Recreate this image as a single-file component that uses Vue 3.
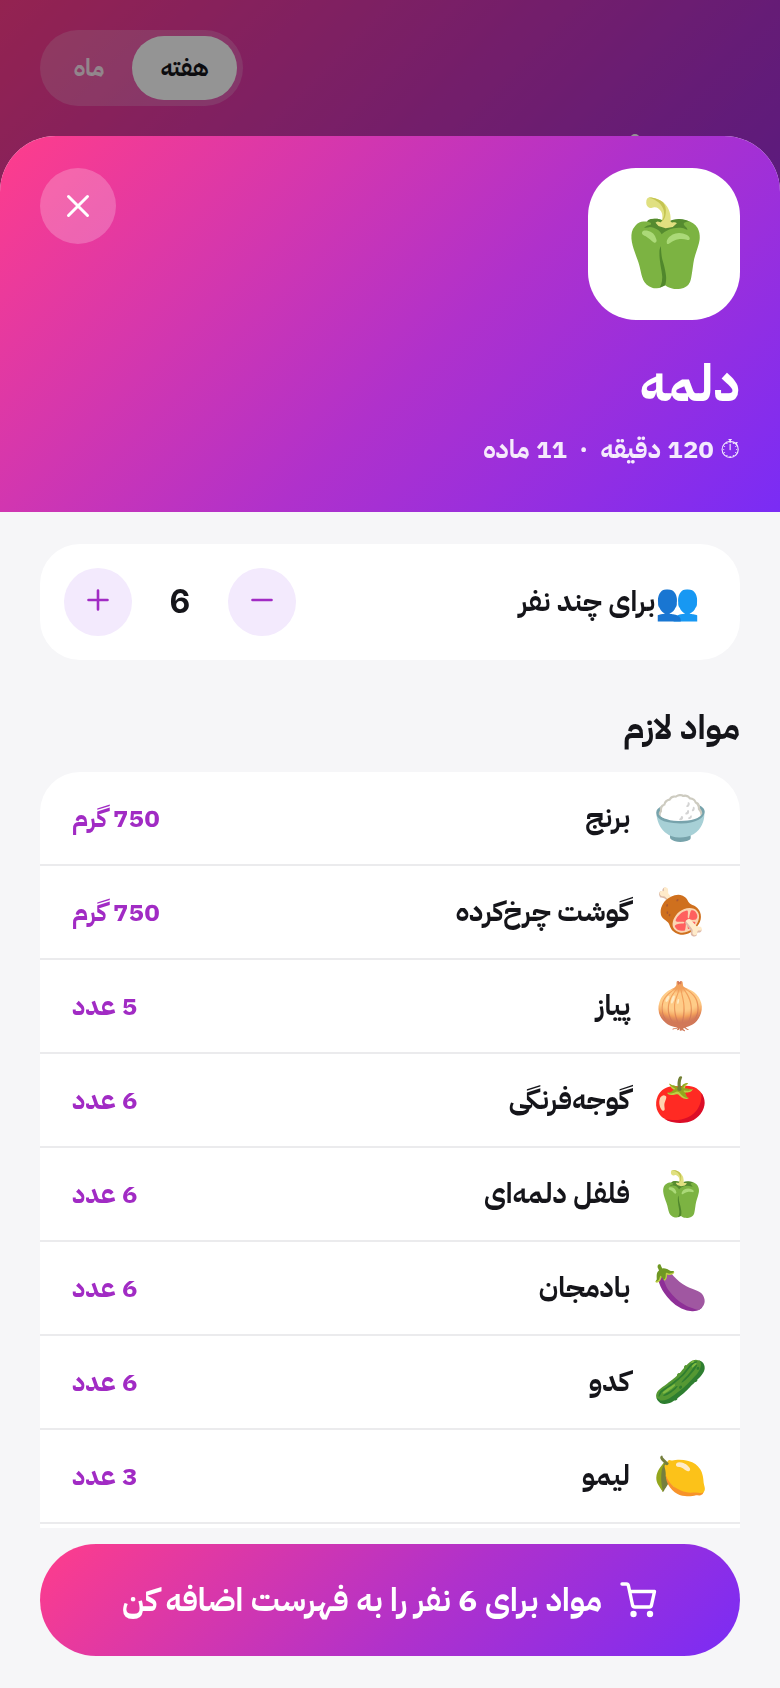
<template>
  <div class="page" dir="rtl">
    <header class="page-header">
      <div class="toggle">
        <button
          v-for="item in ranges"
          :key="item"
          type="button"
          class="toggle-item"
          :class="{ active: item === range }"
          @click="range = item"
        >
          {{ item }}
        </button>
      </div>
      <span class="page-dot"></span>
    </header>

    <div class="overlay">
      <section class="sheet">
        <!-- sheet header -->
        <div class="hero">
          <div class="hero-top">
            <div class="hero-icon">🫑</div>
            <button type="button" class="close-btn" aria-label="بستن">
              <svg width="32" height="32" viewBox="0 0 32 32">
                <path d="M6.5 6.5 L25.5 25.5 M25.5 6.5 L6.5 25.5" />
              </svg>
            </button>
          </div>
          <h1>دلمه</h1>
          <p class="meta">
            <span><span class="timer">⏱</span> 120 دقیقه</span>
            <span>·</span>
            <span>11 ماده</span>
          </p>
        </div>

        <div class="content">
          <!-- servings -->
          <div class="servings">
            <div class="servings-label">
              <span class="people">👥</span>
              <span>برای چند نفر</span>
            </div>
            <div class="stepper">
              <button type="button" aria-label="کمتر" @click="servings--">
                <svg width="28" height="32" viewBox="0 0 28 32"><path d="M4.5 14 H23.5" /></svg>
              </button>
              <span class="count">{{ servings }}</span>
              <button type="button" aria-label="بیشتر" @click="servings++">
                <svg width="28" height="32" viewBox="0 0 28 32"><path d="M4.5 14 H23.5 M14 4.5 V23.5" /></svg>
              </button>
            </div>
          </div>

          <!-- ingredients -->
          <h2>مواد لازم</h2>
          <ul class="ingredients">
            <li v-for="item in ingredients" :key="item.name">
              <span class="emoji">{{ item.icon }}</span>
              <span class="name">{{ item.name }}</span>
              <span class="amount">{{ item.amount }}</span>
            </li>
          </ul>
        </div>

        <div class="footer">
          <button type="button" class="add-btn">
            <svg width="40" height="40" viewBox="0 0 40 40">
              <path d="M4 4 H8.5 Q10 4 10.5 6 L14.5 25 Q15 27 17 27 H31.5 Q33 27 33.5 25 L36.5 11.5 H12" />
              <circle cx="15.5" cy="34" r="3.2" />
              <circle cx="32" cy="34" r="3.2" />
            </svg>
            <span>مواد برای {{ servings }} نفر را به فهرست اضافه کن</span>
          </button>
        </div>
      </section>
    </div>
  </div>
</template>

<script setup>
import { ref } from 'vue'

const ranges = ['هفته', 'ماه']
const range = ref('هفته')
const servings = ref(6)

const ingredients = [
  { icon: '🍚', name: 'برنج', amount: '750 گرم' },
  { icon: '🍖', name: 'گوشت چرخ‌کرده', amount: '750 گرم' },
  { icon: '🧅', name: 'پیاز', amount: '5 عدد' },
  { icon: '🍅', name: 'گوجه‌فرنگی', amount: '6 عدد' },
  { icon: '🫑', name: 'فلفل دلمه‌ای', amount: '6 عدد' },
  { icon: '🍆', name: 'بادمجان', amount: '6 عدد' },
  { icon: '🥒', name: 'کدو', amount: '6 عدد' },
  { icon: '🍋', name: 'لیمو', amount: '3 عدد' }
]
</script>

<style>
body {
  margin: 0;
  background: #f6f6f8;
}
</style>

<style scoped>
* {
  box-sizing: border-box;
}

.page {
  height: 100vh;
  overflow: hidden;
  color: #15151a;
  font-family: "IBM Plex Sans Arabic", "Noto Sans", sans-serif;
}

button {
  border: none;
  padding: 0;
  font-family: inherit;
  cursor: pointer;
}

svg {
  fill: none;
  stroke: currentColor;
  stroke-linecap: round;
  stroke-linejoin: round;
}

.page-header,
.hero,
.add-btn {
  background: linear-gradient(135deg, #ff3d8b 0%, #b031cb 56%, #7a2cf5 100%);
}

.page-header {
  display: flex;
  flex-direction: column;
  gap: 28px;
  height: 600px;
  padding: 30px 40px;
}

.toggle {
  display: flex;
  align-self: flex-end;
  padding: 6px;
  border-radius: 38px;
  background: rgba(255, 255, 255, 0.2);
}

.toggle-item {
  height: 64px;
  padding: 0 28px;
  border-radius: 32px;
  background: transparent;
  color: rgba(255, 255, 255, 0.85);
  font-size: 24px;
  font-weight: 700;
}

.toggle-item.active {
  background: #fff;
  color: #15151a;
}

.page-dot {
  width: 10px;
  height: 10px;
  margin-inline-start: 100px;
  border-radius: 50%;
  background: #fff;
}

.overlay {
  position: fixed;
  inset: 0;
  display: flex;
  padding-top: 136px;
  background: rgba(0, 0, 0, 0.42);
}

.sheet {
  flex: 1;
  display: flex;
  flex-direction: column;
  min-width: 0;
  overflow: hidden;
  border-radius: 56px 56px 0 0;
  background: #f6f6f8;
}

.hero {
  flex: none;
  padding: 32px 40px 40px;
  color: #fff;
}

.hero-top {
  display: flex;
  justify-content: space-between;
  align-items: flex-start;
}

.hero-icon {
  display: flex;
  align-items: center;
  justify-content: center;
  width: 152px;
  height: 152px;
  border-radius: 48px;
  background: #fff;
  font-size: 84px;
  line-height: 96px;
}

.close-btn {
  display: flex;
  align-items: center;
  justify-content: center;
  width: 76px;
  height: 76px;
  border-radius: 50%;
  background: rgba(255, 255, 255, 0.22);
  color: #fff;
  stroke-width: 3;
}

h1 {
  margin: 28px 0 0;
  font-size: 52px;
  line-height: 72px;
  font-weight: 700;
}

.meta {
  display: flex;
  align-items: center;
  gap: 12px;
  margin: 10px 0 2px;
  font-size: 26px;
  line-height: 40px;
  font-weight: 700;
  color: rgba(255, 255, 255, 0.9);
}

.timer {
  font-weight: 400;
}

.content {
  flex: 1;
  min-height: 0;
  overflow: hidden;
  padding: 32px 40px 0;
}

.servings {
  display: flex;
  align-items: center;
  justify-content: space-between;
  padding: 24px;
  border-radius: 40px;
  background: #fff;
}

.servings-label {
  display: flex;
  align-items: center;
  padding-inline-start: 16px;
  font-size: 28px;
  font-weight: 700;
}

.people {
  font-size: 36px;
  font-weight: 400;
  line-height: 48px;
}

.stepper {
  display: flex;
  align-items: center;
}

.stepper button {
  display: flex;
  align-items: center;
  justify-content: center;
  width: 68px;
  height: 68px;
  border-radius: 50%;
  background: #f3eafd;
  color: #a12bc4;
  stroke-width: 2.6;
}

.count {
  width: 96px;
  text-align: center;
  font-family: Inter, sans-serif;
  font-size: 32px;
  line-height: 40px;
  font-weight: 700;
}

h2 {
  margin: 44px 0 20px;
  font-size: 34px;
  line-height: 48px;
  font-weight: 700;
}

.ingredients {
  margin: 0;
  padding: 0 0 40px;
  list-style: none;
  border-radius: 40px;
  background: #fff;
}

.ingredients li {
  display: flex;
  align-items: center;
  height: 94px;
  padding: 0 32px;
  border-bottom: 2px solid #ebebed;
}

.emoji {
  width: 56px;
  font-size: 44px;
  line-height: 56px;
  text-align: center;
}

.name {
  flex: 1;
  margin-inline-start: 22px;
  font-size: 28px;
  font-weight: 700;
}

.amount {
  color: #a12bc4;
  font-size: 26px;
  font-weight: 700;
}

.footer {
  flex: none;
  padding: 16px 40px 32px;
}

.add-btn {
  display: flex;
  align-items: center;
  justify-content: center;
  gap: 16px;
  width: 100%;
  height: 112px;
  border-radius: 56px;
  color: #fff;
  font-size: 32px;
  font-weight: 700;
  stroke-width: 3.4;
}

.add-btn circle {
  fill: currentColor;
  stroke: none;
}
</style>
